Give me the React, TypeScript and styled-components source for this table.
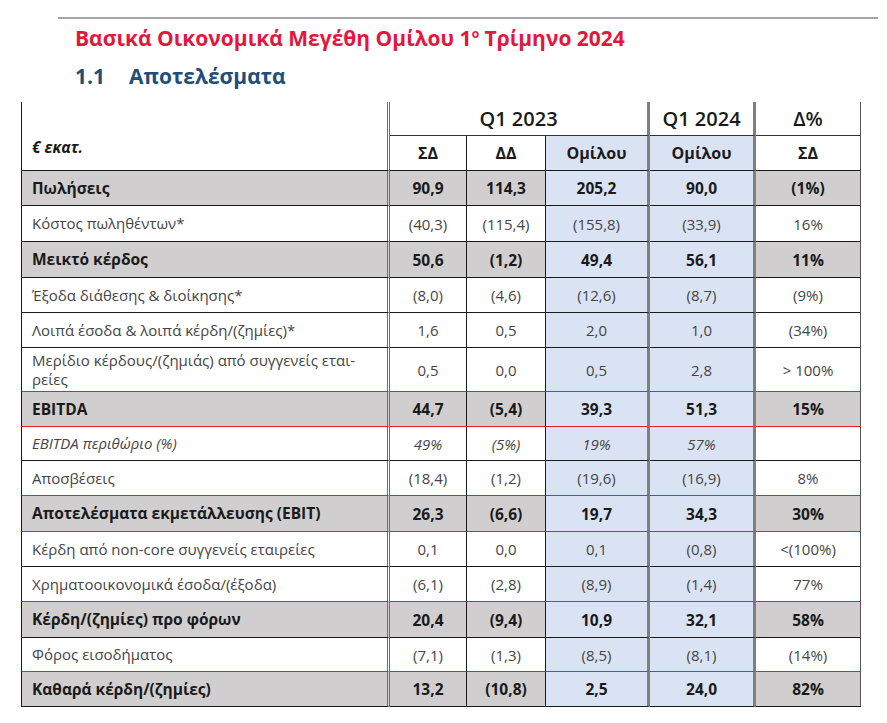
import React from "react";
import styled, { createGlobalStyle, css } from "styled-components";

const GlobalStyle = createGlobalStyle`
  html, body { margin: 0; padding: 0; background: #ffffff; }
  body { font-family: "Open Sans", "Noto Sans", sans-serif; }
`;

const Page = styled.div`
  width: 887px;
  height: 723px;
  background: #fff;
  padding-top: 17px;
  box-sizing: border-box;
  overflow: hidden;
`;

const TopRule = styled.div`
  margin-left: 58px;
  width: 820px;
  height: 0;
  border-top: 2px solid #a6a6a6;
`;

const Title = styled.h1`
  margin: 5px 0 0 75px;
  font-size: 21px;
  line-height: 28px;
  font-weight: 700;
  color: #e2173d;
  sup {
    font-size: 12px;
    line-height: 0;
    vertical-align: 8px;
  }
`;

const Heading = styled.h2`
  margin: 10px 0 0 75px;
  display: flex;
  gap: 24px;
  font-size: 21px;
  line-height: 28px;
  font-weight: 700;
  color: #1f4e79;
`;

const Table = styled.table`
  margin: 12px 0 0 21px;
  width: 840px;
  table-layout: fixed;
  border-collapse: separate;
  border-spacing: 0;
  font-size: 15px;
  color: #404040;
`;

type Line = "black" | "red" | "none";
const lineColor = (l: Line) =>
  l === "red" ? "#e8202c" : l === "black" ? "#1a1a1a" : "transparent";

type Kind = "bold" | "normal" | "italic";
type Edge = "thick" | "thin" | "edge";

const rightBorder = (e: Edge) =>
  e === "thick" ? "3px solid #7f7f7f" : e === "edge" ? "1px solid #555" : "1px solid #1a1a1a";

const HeadTop = styled.th<{ $right: Edge }>`
  height: 34px;
  box-sizing: border-box;
  padding: 0;
  font-size: 20px;
  font-weight: 600;
  color: #1a1a1a;
  text-align: center;
  vertical-align: middle;
  border-bottom: 1px solid #333;
  border-right: ${(p) => rightBorder(p.$right)};
`;

const CornerCell = styled.th`
  box-sizing: border-box;
  padding: 0 0 12px 10px;
  text-align: left;
  vertical-align: bottom;
  font-size: 15.5px;
  font-weight: 700;
  font-style: italic;
  color: #1a1a1a;
  border-left: 1px solid #1a1a1a;
  border-right: 3px double #6f6f6f;
  border-bottom: 1px solid #1a1a1a;
`;

const HeadSub = styled.th<{ $blue?: boolean; $right: Edge }>`
  height: 35px;
  box-sizing: border-box;
  padding: 0;
  font-size: 16px;
  font-weight: 700;
  color: #1a1a1a;
  text-align: center;
  vertical-align: middle;
  background: ${(p) => (p.$blue ? "#dae3f3" : "#fff")};
  border-bottom: 1px solid #1a1a1a;
  border-right: ${(p) => rightBorder(p.$right)};
`;

const Row = styled.tr<{ $line: Line; $h: number }>`
  height: ${(p) => p.$h}px;
  & > td {
    border-bottom: 1px solid ${(p) => lineColor(p.$line)};
  }
`;

const kindStyle = (k: Kind) =>
  k === "bold"
    ? css`
        font-weight: 700;
        font-size: 15.5px;
        color: #1a1a1a;
        background: #d0cece;
      `
    : k === "italic"
    ? css`
        font-style: italic;
        color: #454545;
        background: #fff;
      `
    : css`
        color: #454545;
        background: #fff;
      `;

const LabelCell = styled.td<{ $kind: Kind }>`
  box-sizing: border-box;
  padding: 2px 6px 2px 10px;
  line-height: 19px;
  text-align: left;
  vertical-align: middle;
  border-left: 1px solid #1a1a1a;
  border-right: 3px double #6f6f6f;
  ${(p) => kindStyle(p.$kind)}
`;

const ValueCell = styled.td<{ $kind: Kind; $blue?: boolean; $right: Edge }>`
  box-sizing: border-box;
  padding: 0;
  text-align: center;
  vertical-align: middle;
  ${(p) => kindStyle(p.$kind)}
  ${(p) => p.$blue && css`background: #dae3f3;`}
  border-right: ${(p) => rightBorder(p.$right)};
`;

type RowData = {
  label: React.ReactNode;
  v: [string, string, string, string, string];
  kind: Kind;
  line: Line;
  h: number;
};

const rows: RowData[] = [
  { label: "Πωλήσεις", v: ["90,9", "114,3", "205,2", "90,0", "(1%)"], kind: "bold", line: "black", h: 35 },
  { label: "Κόστος πωληθέντων*", v: ["(40,3)", "(115,4)", "(155,8)", "(33,9)", "16%"], kind: "normal", line: "black", h: 36 },
  { label: "Μεικτό κέρδος", v: ["50,6", "(1,2)", "49,4", "56,1", "11%"], kind: "bold", line: "black", h: 36 },
  { label: "Έξοδα διάθεσης & διοίκησης*", v: ["(8,0)", "(4,6)", "(12,6)", "(8,7)", "(9%)"], kind: "normal", line: "black", h: 35 },
  { label: "Λοιπά έσοδα & λοιπά κέρδη/(ζημίες)*", v: ["1,6", "0,5", "2,0", "1,0", "(34%)"], kind: "normal", line: "black", h: 35 },
  {
    label: (
      <>
        Μερίδιο κέρδους/(ζημιάς) από συγγενείς εται-
        <br />
        ρείες
      </>
    ),
    v: ["0,5", "0,0", "0,5", "2,8", "> 100%"],
    kind: "normal",
    line: "red",
    h: 44,
  },
  { label: "EBITDA", v: ["44,7", "(5,4)", "39,3", "51,3", "15%"], kind: "bold", line: "red", h: 35 },
  { label: "EBITDA περιθώριο (%)", v: ["49%", "(5%)", "19%", "57%", ""], kind: "italic", line: "black", h: 34 },
  { label: "Αποσβέσεις", v: ["(18,4)", "(1,2)", "(19,6)", "(16,9)", "8%"], kind: "normal", line: "red", h: 35 },
  { label: "Αποτελέσματα εκμετάλλευσης (EBIT)", v: ["26,3", "(6,6)", "19,7", "34,3", "30%"], kind: "bold", line: "red", h: 36 },
  { label: "Κέρδη από non-core συγγενείς εταιρείες", v: ["0,1", "0,0", "0,1", "(0,8)", "<(100%)"], kind: "normal", line: "black", h: 35 },
  { label: "Χρηματοοικονομικά έσοδα/(έξοδα)", v: ["(6,1)", "(2,8)", "(8,9)", "(1,4)", "77%"], kind: "normal", line: "red", h: 35 },
  { label: "Κέρδη/(ζημίες) προ φόρων", v: ["20,4", "(9,4)", "10,9", "32,1", "58%"], kind: "bold", line: "black", h: 36 },
  { label: "Φόρος εισοδήματος", v: ["(7,1)", "(1,3)", "(8,5)", "(8,1)", "(14%)"], kind: "normal", line: "red", h: 34 },
  { label: "Καθαρά κέρδη/(ζημίες)", v: ["13,2", "(10,8)", "2,5", "24,0", "82%"], kind: "bold", line: "black", h: 35 },
];

const colRight: Edge[] = ["thin", "thin", "thick", "thick", "edge"];
const colBlue = [false, false, true, true, false];

export default function App() {
  return (
    <>
      <GlobalStyle />
      <Page>
        <TopRule />
        <Title>
          Βασικά Οικονομικά Μεγέθη Ομίλου 1<sup>ο</sup> Τρίμηνο 2024
        </Title>
        <Heading>
          <span>1.1</span>
          <span>Αποτελέσματα</span>
        </Heading>
        <Table>
          <colgroup>
            <col style={{ width: 369 }} />
            <col style={{ width: 77 }} />
            <col style={{ width: 79 }} />
            <col style={{ width: 104 }} />
            <col style={{ width: 106 }} />
            <col style={{ width: 105 }} />
          </colgroup>
          <thead>
            <tr>
              <CornerCell rowSpan={2}>€ εκατ.</CornerCell>
              <HeadTop colSpan={3} $right="thick">Q1 2023</HeadTop>
              <HeadTop $right="thick">Q1 2024</HeadTop>
              <HeadTop $right="edge">Δ%</HeadTop>
            </tr>
            <tr>
              <HeadSub $right="thin">ΣΔ</HeadSub>
              <HeadSub $right="thin">ΔΔ</HeadSub>
              <HeadSub $right="thick" $blue>Ομίλου</HeadSub>
              <HeadSub $right="thick" $blue>Ομίλου</HeadSub>
              <HeadSub $right="edge">ΣΔ</HeadSub>
            </tr>
          </thead>
          <tbody>
            {rows.map((r, i) => (
              <Row key={i} $line={r.line} $h={r.h}>
                <LabelCell $kind={r.kind}>{r.label}</LabelCell>
                {r.v.map((val, j) => (
                  <ValueCell key={j} $kind={r.kind} $blue={colBlue[j]} $right={colRight[j]}>
                    {val}
                  </ValueCell>
                ))}
              </Row>
            ))}
          </tbody>
        </Table>
      </Page>
    </>
  );
}
